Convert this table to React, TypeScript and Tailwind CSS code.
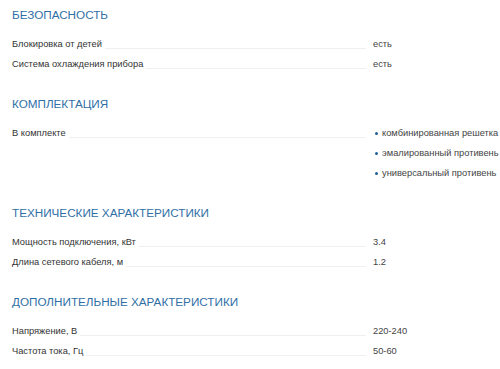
const sections = [
  {
    title: "БЕЗОПАСНОСТЬ",
    rows: [
      { label: "Блокировка от детей", values: ["есть"] },
      { label: "Система охлаждения прибора", values: ["есть"] },
    ],
  },
  {
    title: "КОМПЛЕКТАЦИЯ",
    rows: [
      {
        label: "В комплекте",
        values: ["комбинированная решетка", "эмалированный противень", "универсальный противень"],
        bullets: true,
      },
    ],
  },
  {
    title: "ТЕХНИЧЕСКИЕ ХАРАКТЕРИСТИКИ",
    rows: [
      { label: "Мощность подключения, кВт", values: ["3.4"] },
      { label: "Длина сетевого кабеля, м", values: ["1.2"] },
    ],
  },
  {
    title: "ДОПОЛНИТЕЛЬНЫЕ ХАРАКТЕРИСТИКИ",
    rows: [
      { label: "Напряжение, В", values: ["220-240"] },
      { label: "Частота тока, Гц", values: ["50-60"] },
    ],
  },
];

type Row = { label: string; values: string[]; bullets?: boolean };

const SpecRow = ({ row }: { row: Row }) => (
  <div className="flex">
    <div className="flex w-[361px] shrink-0 items-baseline pr-[7px] leading-[20px] text-[#333]">
      <span className="whitespace-nowrap">{row.label}</span>
      <span className="ml-[3px] flex-1 translate-y-[2px] border-b border-[#f0f0f0]" />
    </div>
    <div className="flex flex-col">
      {row.values.map((v) => (
        <div key={v} className="flex h-[20px] items-baseline whitespace-nowrap leading-[20px] text-[#444]">
          {row.bullets && (
            <span className="mr-[4px] ml-[2px] inline-block h-[3px] w-[3px] translate-y-[-1px] rounded-full bg-[#1f5f93]" />
          )}
          {v}
        </div>
      ))}
    </div>
  </div>
);

export default function App() {
  return (
    <div className="min-h-[369px] bg-white px-[12px] pt-[7px] font-['Liberation_Sans',Arial,sans-serif]">
      {sections.map((s, i) => (
        <section key={s.title} className={i > 0 ? "mt-[22px]" : ""}>
          <h2 className="text-[11.7px] leading-[16px] text-[#2f6fa6]">{s.title}</h2>
          <div className="mt-[11px] text-[9.3px]">
            {s.rows.map((r) => (
              <SpecRow key={r.label} row={r} />
            ))}
          </div>
        </section>
      ))}
    </div>
  );
}
